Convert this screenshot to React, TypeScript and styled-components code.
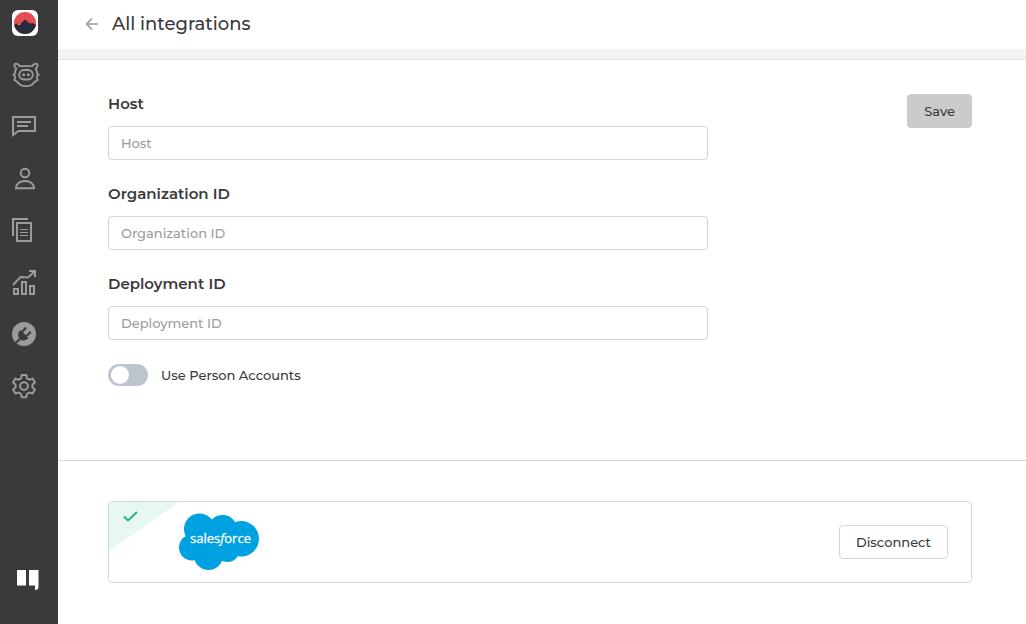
import React, { useState } from "react";
import styled, { createGlobalStyle } from "styled-components";

const GlobalStyle = createGlobalStyle`
  *, *::before, *::after { box-sizing: border-box; }
  body {
    margin: 0;
    background: #fff;
    color: #39393b;
    font-family: Montserrat, Inter, "Liberation Sans", sans-serif;
    font-size: 13px;
    font-weight: 500;
  }
`;

const Page = styled.div`
  display: flex;
  min-height: 100vh;
`;

const Sidebar = styled.aside`
  display: flex;
  flex-direction: column;
  flex: 0 0 58px;
  background: #3a3a3c;
`;

const LogoLink = styled.a`
  display: flex;
  height: 49px;
  padding: 10px 12px;
`;

const Nav = styled.nav`
  display: flex;
  flex-direction: column;
  flex: 1;
`;

const NavLink = styled.a`
  display: flex;
  align-items: center;
  height: 52px;
  padding-left: 12px;
  color: #9b9b9b;
`;

const DocsLink = styled(NavLink)`
  margin-bottom: 19px;
  color: #fff;
`;

const Main = styled.main`
  flex: 1;
  min-width: 0;
`;

const Header = styled.header`
  display: flex;
  align-items: center;
  gap: 12px;
  height: 60px;
  padding: 0 26px 11px;
  border-bottom: 1px solid #e6e6e6;
  box-shadow: inset 0 -10px #f3f3f3;
`;

const BackButton = styled.button`
  display: flex;
  padding: 0;
  border: 0;
  background: none;
  color: #9b9b9b;
  cursor: pointer;
`;

const Title = styled.h1`
  margin: 0;
  font-size: 18px;
  font-weight: 500;
  line-height: 24px;
`;

const Settings = styled.form`
  display: flex;
  align-items: flex-start;
  justify-content: space-between;
  gap: 24px;
  padding: 34px 54px 74px 50px;
  border-bottom: 1px solid #d6d6d8;
`;

const Fields = styled.div`
  display: flex;
  flex-direction: column;
  gap: 24px;
  flex: 0 1 600px;
`;

const Field = styled.div`
  display: flex;
  flex-direction: column;
  gap: 12px;
`;

const FieldLabel = styled.label`
  font-size: 15px;
  font-weight: 600;
  line-height: 20px;
`;

const TextInput = styled.input`
  width: 100%;
  height: 34px;
  padding: 0 12px;
  border: 1px solid #d6d6d8;
  border-radius: 4px;
  background: #fff;
  color: inherit;
  font: inherit;
  &::placeholder { color: #9b9b9b; opacity: 1; }
`;

const ToggleLabel = styled.label`
  display: flex;
  align-items: center;
  gap: 13px;
  height: 22px;
`;

const Toggle = styled.input`
  appearance: none;
  width: 40px;
  height: 22px;
  margin: 0;
  padding: 2px 3px;
  border-radius: 11px;
  background: #bcc5ce;
  cursor: pointer;
  &::before {
    content: "";
    display: block;
    width: 18px;
    height: 18px;
    border-radius: 50%;
    background: #fff;
  }
  &:checked { background: #1fb87f; }
  &:checked::before { margin-left: auto; }
`;

const Button = styled.button<{ $muted?: boolean }>`
  height: 34px;
  padding: 0 16px;
  border: 1px solid ${(p) => (p.$muted ? "#cbcbcb" : "#d6d6d8")};
  border-radius: 4px;
  background: ${(p) => (p.$muted ? "#cbcbcb" : "#fff")};
  color: #39393b;
  font: inherit;
  cursor: pointer;
`;

const Connection = styled.section`
  padding: 40px 54px 40px 50px;
`;

const Card = styled.div`
  display: flex;
  align-items: center;
  height: 82px;
  padding-right: 23px;
  border: 1px solid #d6d6d8;
  border-radius: 4px;
  overflow: hidden;
`;

const Corner = styled.svg`
  align-self: flex-start;
  flex: none;
`;

const CardAction = styled.div`
  margin-left: auto;
`;

const iconProps = {
  width: 28,
  height: 28,
  viewBox: "0 0 28 28",
  fill: "none",
  stroke: "currentColor",
  strokeWidth: 2,
  "aria-hidden": true,
} as const;

const PigIcon = () => (
  <svg {...iconProps} strokeWidth="1.8" strokeLinejoin="round" strokeLinecap="round">
    <path d="M7.500 5.200h13M7.500 5.200C7 3.600 5.300 2.700 3.200 2.700 1.800 3.800 2.300 6.300 4.400 7.600L3 10.500v2l-1.800 1 1.800 1.700v2.300l-.8 1.500 2.600 1.500L8.500 24c3 1.300 8 1.300 11 0l3.700-3.500 2.600-1.500-.8-1.500v-2.300l1.800-1.700-1.800-1v-2l-1.400-2.900c2.100-1.300 2.600-3.800 1.200-4.900-2.100 0-3.800.9-4.300 2.500" />
    <rect x="7.200" y="9" width="13.600" height="9.500" rx="4.700" />
    <circle cx="11.700" cy="13.700" r=".6" fill="currentColor" />
    <circle cx="16.300" cy="13.700" r=".6" fill="currentColor" />
  </svg>
);

const ChatIcon = () => (
  <svg {...iconProps}>
    <path d="M1 4h22v14H6.500L1 22z" />
    <path d="M5 9h14M5 13h11" />
  </svg>
);

const PersonIcon = () => (
  <svg {...iconProps}>
    <circle cx="13" cy="8" r="4.300" />
    <path d="M4 23.200c0-4.200 3.600-7.200 9-7.200s9 3 9 7.200z" />
  </svg>
);

const PagesIcon = () => (
  <svg {...iconProps}>
    <path d="M16 2H1v17" />
    <path d="M5 6h14v18H5z" />
    <path d="M8 12.500h8M8 15.500h8M8 18.500h8" strokeWidth="1.200" />
  </svg>
);

const ChartIcon = () => (
  <svg {...iconProps}>
    <path d="M2 20h4v5H2zM10 13h4v12h-4zM18 17h4v8h-4z" />
    <path d="M1 16l7.500-8 7.500.500L22.500 2.500" />
    <path d="M17 2h6v6" />
  </svg>
);

const PlugIcon = () => (
  <svg {...iconProps} stroke="none">
    <circle cx="12" cy="13" r="12" fill="currentColor" />
    <g fill="#3a3a3c" stroke="#3a3a3c">
      <path d="M8.500 10l7 7c-2.200 1.900-5 2.200-7.200.700-1.800-2-1.800-5.200.2-7.700z" strokeWidth="1.500" strokeLinejoin="round" />
      <path d="M8 18l-4.500 4" strokeWidth="2" />
      <path d="M10.800 10.200l2.600-3M15.200 14.200l3-2.700" strokeWidth="2.200" strokeLinecap="round" />
    </g>
  </svg>
);

const GearIcon = () => (
  <svg {...iconProps} strokeLinejoin="round">
    <path d="M9.700 2h4.600l.7 3.300 2.400 1.400 3.200-1.100 2.300 4-2.500 2.200v2.600l2.500 2.200-2.300 4-3.200-1.100-2.400 1.400-.7 3.300H9.700L9 20.900l-2.400-1.400-3.200 1.100-2.300-4 2.500-2.200v-2.600L1.100 9.600l2.300-4 3.200 1.100L9 5.300z" />
    <circle cx="12" cy="13.100" r="3.900" />
  </svg>
);

const navItems = [
  { label: "Bots", Icon: PigIcon },
  { label: "Conversations", Icon: ChatIcon },
  { label: "Contacts", Icon: PersonIcon },
  { label: "Content", Icon: PagesIcon },
  { label: "Analytics", Icon: ChartIcon },
  { label: "Integrations", Icon: PlugIcon },
  { label: "Settings", Icon: GearIcon },
];

const BrandLogo = () => (
  <svg width="26" height="26" viewBox="0 0 26 26" aria-hidden="true">
    <defs>
      <clipPath id="brand-disc"><circle cx="13" cy="13" r="11" /></clipPath>
    </defs>
    <rect width="26" height="26" rx="6" fill="#fff" />
    <g clipPath="url(#brand-disc)">
      <path d="M0 0h26v26H0z" fill="#e54d50" />
      <path d="M1 26V15l4-1.500 3 .5 5-4.500 5 4 2-.5 5 2v11z" fill="#282b3a" />
      <path d="M5 14.500l3-1.500 1 1-2 1.500z" fill="#d97b3c" />
    </g>
  </svg>
);

const BookIcon = () => (
  <svg {...iconProps} stroke="none">
    <path d="M5 5h9v16H5zM17 5h9.500v17c0 1.800-1 3-3.500 3v-4h-6z" fill="currentColor" />
    <path d="M5 20.500h9M17 20.500h6" stroke="#a5a5a6" strokeWidth="1" />
  </svg>
);

const SalesforceLogo = () => (
  <svg width="80" height="58" viewBox="0 0 80 58" role="img" aria-label="Salesforce">
    <g fill="#00a1e0">
      <circle cx="20.500" cy="16" r="15.500" />
      <circle cx="43.500" cy="17" r="15" />
      <circle cx="62.300" cy="25.800" r="17.700" />
      <circle cx="13" cy="34.500" r="13" />
      <circle cx="29.500" cy="42.500" r="14.500" />
      <circle cx="48.500" cy="37" r="12" />
      <path d="M12 24l20-10 22 6v20l-20 6-20-4z" />
    </g>
    <text
      x="11"
      y="30"
      fill="#fff"
      stroke="#fff"
      strokeWidth=".3"
      fontFamily="'Open Sans', sans-serif"
      fontSize="13"
      fontWeight="400"
    >
      sales<tspan fontStyle="italic">f</tspan>orce
    </text>
  </svg>
);

const fields = [
  { id: "host", label: "Host" },
  { id: "organization-id", label: "Organization ID" },
  { id: "deployment-id", label: "Deployment ID" },
];

export default function App() {
  const [personAccounts, setPersonAccounts] = useState(false);

  return (
    <Page>
      <GlobalStyle />
      <Sidebar>
        <LogoLink href="#" aria-label="Home"><BrandLogo /></LogoLink>
        <Nav aria-label="Main">
          {navItems.map(({ label, Icon }) => (
            <NavLink key={label} href="#" aria-label={label}><Icon /></NavLink>
          ))}
        </Nav>
        <DocsLink href="#" aria-label="Documentation"><BookIcon /></DocsLink>
      </Sidebar>
      <Main>
        <Header>
          <BackButton type="button" aria-label="Back">
            <svg width="16" height="16" viewBox="0 0 16 16" fill="none" stroke="currentColor" strokeWidth="1.600" aria-hidden="true">
              <path d="M14 8H3M8 2.500L2.500 8 8 13.500" />
            </svg>
          </BackButton>
          <Title>All integrations</Title>
        </Header>
        <Settings onSubmit={(e) => e.preventDefault()}>
          <Fields>
            {fields.map(({ id, label }) => (
              <Field key={id}>
                <FieldLabel htmlFor={id}>{label}</FieldLabel>
                <TextInput id={id} type="text" placeholder={label} />
              </Field>
            ))}
            <ToggleLabel>
              <Toggle
                type="checkbox"
                checked={personAccounts}
                onChange={(e) => setPersonAccounts(e.target.checked)}
              />
              Use Person Accounts
            </ToggleLabel>
          </Fields>
          <Button type="submit" $muted>Save</Button>
        </Settings>
        <Connection>
          <Card>
            <Corner width="70" height="50" viewBox="0 0 70 50" aria-hidden="true">
              <path d="M0 0h70L0 49z" fill="#e7f7f1" />
              <path d="M15 14.500l4 4 9-8.500" fill="none" stroke="#1fb67a" strokeWidth="1.800" />
            </Corner>
            <SalesforceLogo />
            <CardAction>
              <Button type="button">Disconnect</Button>
            </CardAction>
          </Card>
        </Connection>
      </Main>
    </Page>
  );
}
